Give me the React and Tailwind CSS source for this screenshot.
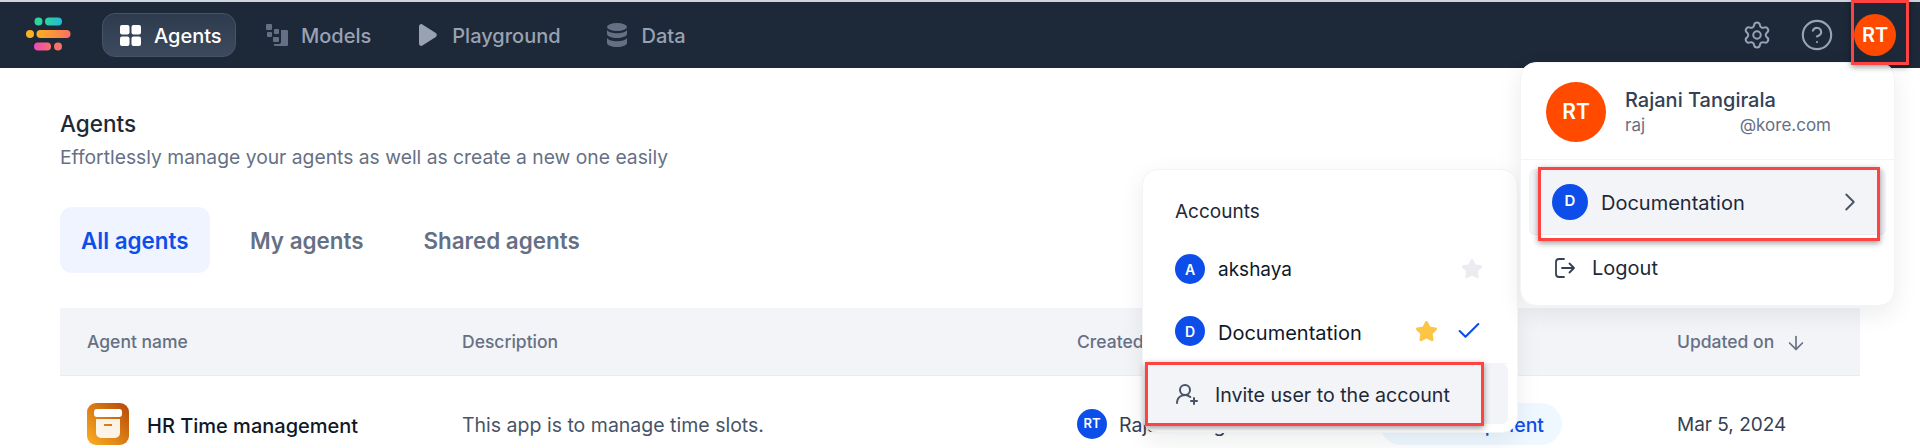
import React from 'react';
import { Settings, CircleHelp, ChevronRight, Star, Check, UserRoundPlus, ArrowDown } from 'lucide-react';

const Logo = () => (
  <svg width="52" height="36" viewBox="0 0 52 36" className="shrink-0">
    <defs>
      <linearGradient id="lg1" x1="0" x2="1" y1="0" y2="0">
        <stop offset="0" stopColor="#2ed3a0" />
        <stop offset="1" stopColor="#22b8d8" />
      </linearGradient>
      <linearGradient id="lg2" x1="0" x2="1" y1="0" y2="0">
        <stop offset="0" stopColor="#fdb022" />
        <stop offset="0.5" stopColor="#fb923c" />
        <stop offset="1" stopColor="#f97066" />
      </linearGradient>
      <linearGradient id="lg3" x1="0" x2="1" y1="0" y2="0">
        <stop offset="0" stopColor="#ee46bc" />
        <stop offset="1" stopColor="#f97066" />
      </linearGradient>
    </defs>
    <circle cx="12.500" cy="4.500" r="4" fill="#2ed3a0" />
    <rect x="19" y="0.500" width="17" height="8" rx="4" fill="url(#lg1)" />
    <circle cx="4" cy="17" r="4" fill="#fdb022" />
    <rect x="10.500" y="13" width="34" height="8" rx="4" fill="url(#lg2)" />
    <rect x="8" y="25.500" width="17" height="8" rx="4" fill="url(#lg3)" />
    <circle cx="32" cy="29.500" r="4" fill="#f97066" />
  </svg>
);

const GridIcon = () => (
  <svg width="21" height="21" viewBox="0 0 21 21" fill="#fff">
    <rect x="0" y="0" width="9.500" height="9.500" rx="2" />
    <rect x="11.500" y="0" width="9.500" height="9.500" rx="2" />
    <rect x="0" y="11.500" width="9.500" height="9.500" rx="2" />
    <rect x="11.500" y="11.500" width="9.500" height="9.500" rx="2" />
  </svg>
);

const ModelsIcon = () => (
  <svg width="22" height="22" viewBox="0 0 22 22" fill="#667085">
    <rect x="0" y="0" width="6" height="6" rx="1" />
    <rect x="1" y="8" width="5" height="5" rx="1" />
    <rect x="8" y="5" width="5" height="5" rx="1" />
    <rect x="7" y="13" width="6" height="5" rx="1" />
    <path d="M15 6h6a1 1 0 0 1 1 1v14a1 1 0 0 1-1 1H9a1 1 0 0 1-1-1v-1h5a2 2 0 0 0 2-2z" />
  </svg>
);

const PlayIcon = () => (
  <svg width="18" height="22" viewBox="0 0 18 22" fill="#98a2b3">
    <path d="M0 2.500C0 .6 1.900-.5 3.400.5l13.400 8.600c1.300.9 1.300 2.900 0 3.800L3.400 21.500C1.900 22.500 0 21.400 0 19.500z" />
  </svg>
);

const DataIcon = () => (
  <svg width="20" height="24" viewBox="0 0 20 24" fill="#667085">
    <ellipse cx="10" cy="4" rx="10" ry="4" />
    <path d="M0 7v4c0 2.200 4.500 4 10 4s10-1.800 10-4V7c-1.500 2.200-5.500 3.200-10 3.200S1.500 9.200 0 7z" />
    <path d="M0 15v5c0 2.200 4.500 4 10 4s10-1.800 10-4v-5c-1.500 2.200-5.500 3.200-10 3.200S1.500 17.200 0 15z" />
  </svg>
);

const LogoutIcon = () => (
  <svg width="20" height="20" viewBox="0 0 20 20" fill="none" stroke="#344054" strokeWidth="1.800" strokeLinecap="round" strokeLinejoin="round">
    <path d="M9 1H4a3 3 0 0 0-3 3v12a3 3 0 0 0 3 3h5" />
    <path d="M7 10h12M14.500 5.500 19 10l-4.500 4.500" />
  </svg>
);

const ArchiveIcon = () => (
  <div className="flex h-[42px] w-[42px] items-center justify-center rounded-[9px] bg-linear-to-tr from-[#fdb022] to-[#b54708]">
    <svg width="28" height="30" viewBox="0 0 28 30" fill="#fff">
      <rect x="0" y="0" width="28" height="8" rx="3" />
      <path d="M2 10h24v14a5 5 0 0 1-5 5H7a5 5 0 0 1-5-5zm8 5v2h8v-2z" fillRule="evenodd" fillOpacity="0.9" />
    </svg>
  </div>
);

const NavItem = ({ icon, label, active, className }) => (
  <div
    className={`flex h-[44px] items-center gap-[13px] text-[20px] font-medium ${className} ${
      active ? 'rounded-[13px] border border-[#475467] bg-linear-to-b from-[#2e3b4f] to-[#3d4a5e] text-white' : 'text-[#98a2b3]'
    }`}
  >
    {icon}
    <span className="pt-[2px]">{label}</span>
  </div>
);

const Avatar = ({ text, className }) => (
  <div className={`flex shrink-0 items-center justify-center rounded-full font-semibold text-white ${className}`}>{text}</div>
);

const RedBox = ({ className }) => (
  <div className={`absolute border-[3px] border-[#ff4343] shadow-[0_2px_6px_rgba(0,0,0,0.4)] ${className}`} />
);

export default function App() {
  return (
    <div className="relative h-[448px] w-[1920px] overflow-hidden bg-white font-['Inter',sans-serif]">
      <div className="h-[2px] bg-[#d0d5dd]" />
      <header className="flex h-[66px] items-center bg-[#1d2939] pl-[26px] pr-[24px]">
        <Logo />
        <NavItem active icon={<GridIcon />} label="Agents" className="ml-[24px] w-[134px] pl-[17px]" />
        <NavItem icon={<ModelsIcon />} label="Models" className="ml-[30px]" />
        <NavItem icon={<PlayIcon />} label="Playground" className="ml-[48px] !gap-[15px]" />
        <NavItem icon={<DataIcon />} label="Data" className="ml-[46px] !gap-[15px]" />
        <div className="ml-auto flex items-center">
          <Settings size={30} strokeWidth={1.600} className="text-[#98a2b3]" />
          <CircleHelp size={34} strokeWidth={1.500} className="ml-[28px] text-[#98a2b3]" />
          <Avatar text="RT" className="ml-[20px] h-[42px] w-[42px] bg-[#ff4a00] text-[20px]" />
        </div>
      </header>

      <main className="px-[60px]">
        <h1 className="mt-[42px] text-[22.500px] font-medium leading-[28px] text-[#1d2939]">Agents</h1>
        <p className="mt-[5px] text-[19.300px] leading-[28px] text-[#667085]">Effortlessly manage your agents as well as create a new one easily</p>

        <div className="mt-[36px] flex items-center text-[22.400px] font-semibold">
          <div className="flex h-[66px] w-[150px] items-center rounded-[12px] bg-[#eff4ff] pl-[21px] pt-[2px] text-[#0d4eea]">All agents</div>
          <div className="ml-[19px] px-[21px] pt-[2px] text-[#667085]">My agents</div>
          <div className="ml-[18px] px-[21px] pt-[2px] text-[#667085]">Shared agents</div>
        </div>

        <div className="mt-[35px] grid h-[68px] grid-cols-[375px_615px_300px_300px_1fr] items-center border-b border-[#eaecf0] bg-[#f2f4f7] pl-[27px] pt-[2px] text-[17.500px] font-medium text-[#667085]">
          <div>Agent name</div>
          <div>Description</div>
          <div>Created by</div>
          <div>Status</div>
          <div className="flex items-center gap-[11px]">
            Updated on <ArrowDown size={22} strokeWidth={1.800} />
          </div>
        </div>

        <div className="grid h-[96px] grid-cols-[375px_615px_300px_300px_1fr] items-center pl-[27px] text-[19.500px]">
          <div className="flex items-center gap-[18px] text-[20px] font-medium text-[#101828]">
            <ArchiveIcon />
            <span className="pt-[3px]">HR Time management</span>
          </div>
          <div className="pt-[3px] text-[#475467]">This app is to manage time slots.</div>
          <div className="flex items-center gap-[12px] text-[#344054]">
            <Avatar text="RT" className="h-[30px] w-[30px] bg-[#0d4eea] text-[13px]" />
            <span className="pt-[3px]">Rajani Tangirala</span>
          </div>
          <div className="ml-[3px]">
            <span className="inline-flex h-[42px] w-[182px] items-center justify-end rounded-full bg-[#eff8ff] pr-[18px] pt-[3px] font-medium text-[#0d4eea]">In development</span>
          </div>
          <div className="pt-[3px] text-[19px] text-[#344054]">Mar 5, 2024</div>
        </div>
      </main>

      {/* accounts submenu */}
      <div className="absolute left-[1142px] top-[169px] flex h-[264px] w-[376px] flex-col rounded-[16px] border border-[#f2f4f7] bg-white pl-[4px] pr-[9px] shadow-[0_8px_24px_rgba(16,24,40,0.08)]">
        <div className="pl-[28px] pt-[30px] text-[19px] leading-[24px] text-[#1d2939]">Accounts</div>
        <div className="mt-[30px] flex h-[30px] items-center pl-[28px] pr-[25px] text-[19px] text-[#101828]">
          <Avatar text="A" className="h-[30px] w-[30px] bg-[#0d4eea] text-[14px]" />
          <span className="ml-[13px] pt-[3px]">akshaya</span>
          <Star size={22} fill="#eaecf0" stroke="#eaecf0" className="ml-auto" />
        </div>
        <div className="mt-[32px] flex h-[30px] items-center pl-[28px] pr-[25px] text-[20px] text-[#101828]">
          <Avatar text="D" className="h-[30px] w-[30px] bg-[#0d4eea] text-[14px]" />
          <span className="ml-[13px] pt-[3px]">Documentation</span>
          <Star size={23} fill="#fdc544" stroke="#fdc544" className="ml-auto" />
          <Check size={28} strokeWidth={1.800} className="ml-[17px] text-[#0d4eea]" />
        </div>
        <div className="mt-[17px] border-t border-[#f2f4f7]" />
        <div className="flex h-[60px] items-center gap-[16px] rounded-[6px] bg-[#f2f4f7] pl-[28px] text-[19.600px] text-[#1d2939]">
          <UserRoundPlus size={24} strokeWidth={2} className="text-[#475467]" />
          <span className="pt-[3px]">Invite user to the account</span>
        </div>
      </div>

      {/* profile menu */}
      <div className="absolute left-[1520px] top-[62px] h-[244px] w-[375px] rounded-[16px] border border-[#f2f4f7] bg-white shadow-[0_8px_24px_rgba(16,24,40,0.08)]">
        <div className="flex h-[97px] items-center border-b border-[#f2f4f7] pl-[25px] pt-[2px]">
          <Avatar text="RT" className="h-[60px] w-[60px] bg-[#ff4a00] text-[21px]" />
          <div className="ml-[19px]">
            <div className="text-[20px] font-medium leading-[26px] text-[#344054]">Rajani Tangirala</div>
            <div className="flex w-[206px] justify-between text-[17px] leading-[24px] text-[#667085]">
              <span>raj</span>
              <span>@kore.com</span>
            </div>
          </div>
        </div>
        <div className="mx-[8px] mt-[9px] flex h-[66px] items-center rounded-[6px] border-b border-[#eaecf0] bg-[#f2f4f7] pl-[23px] pr-[21px] text-[20px] text-[#1d2939]">
          <Avatar text="D" className="h-[36px] w-[36px] bg-[#0d4eea] text-[15px]" />
          <span className="ml-[13px] pt-[3px]">Documentation</span>
          <ChevronRight size={30} strokeWidth={1.500} className="ml-auto text-[#475467]" />
        </div>
        <div className="mt-[13px] flex h-[40px] items-center gap-[17px] pl-[34px] text-[20px] text-[#1d2939]">
          <LogoutIcon />
          Logout
        </div>
      </div>

      <RedBox className="left-[1851px] top-0 h-[65px] w-[58px]" />
      <RedBox className="left-[1538px] top-[167px] h-[74px] w-[342px]" />
      <RedBox className="left-[1145px] top-[362px] h-[64px] w-[339px]" />
    </div>
  );
}
